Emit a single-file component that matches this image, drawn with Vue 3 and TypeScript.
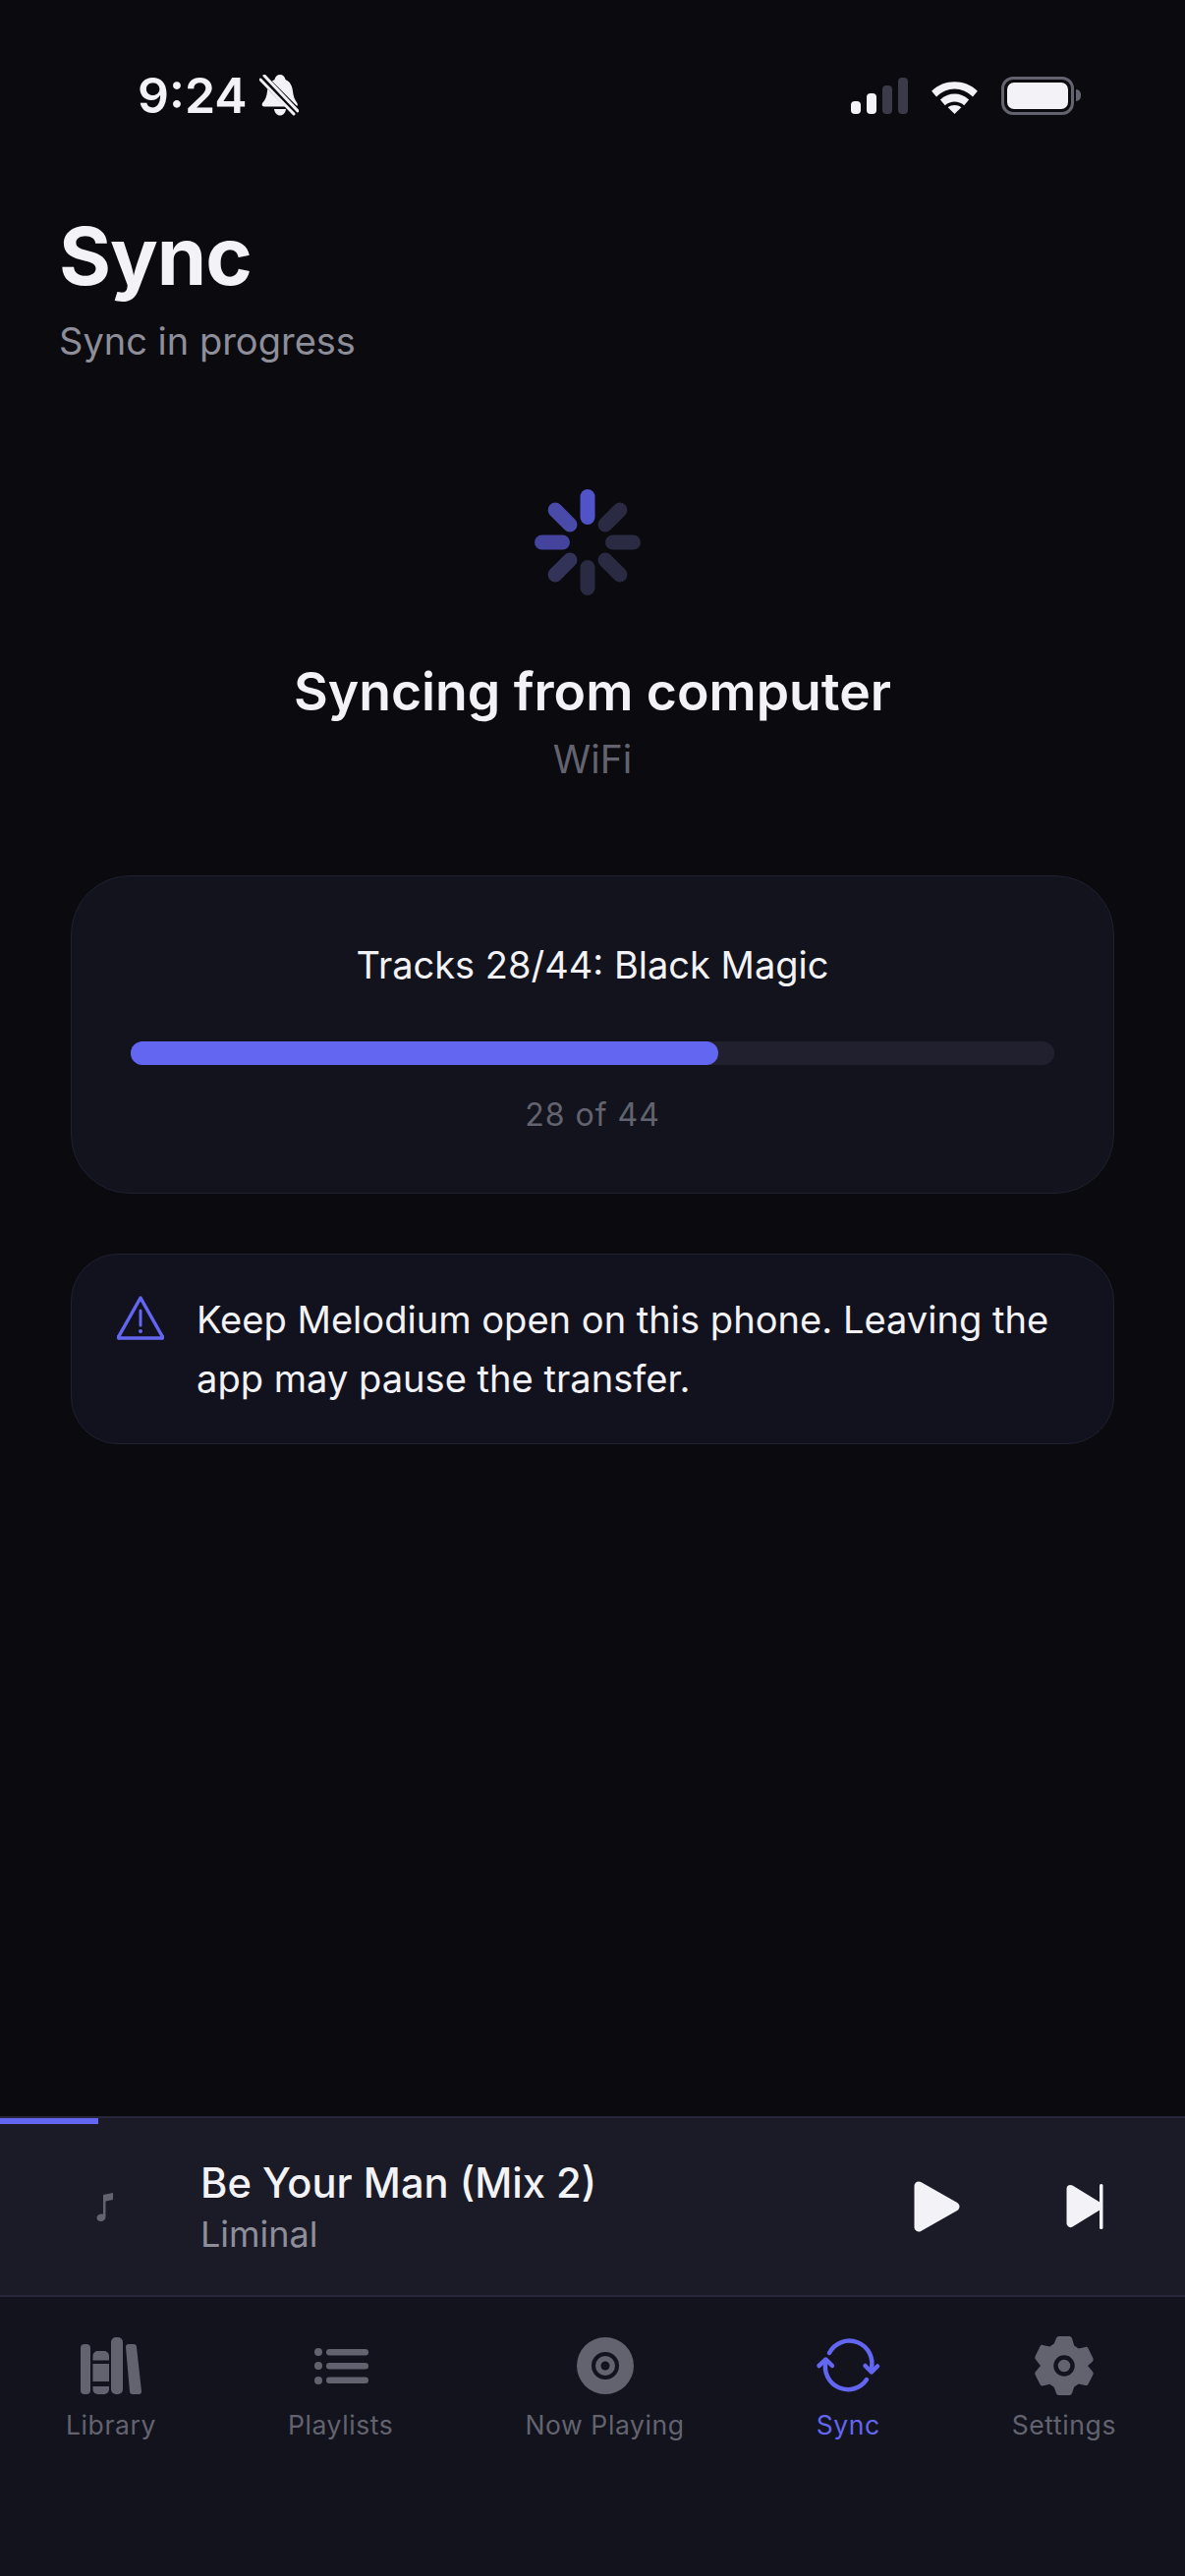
<template>
  <div class="screen">
    <header class="status">
      <div class="status-left">
        <span class="time">9:24</span>
        <svg class="bell" viewBox="0 0 40 42" width="40" height="42">
          <path d="M21 0c3 0 5 2 5.500 5 5 2 7 7 7.500 12 .5 5 2 9 4.500 12 1 2 0 3.500-2 3.500H5c-2 0-3-1.500-2-3.500 3-3 4.500-7 5-12 .5-5 2.500-10 7.500-12C16 2 18 0 21 0z" fill="#f2f2f7"/>
          <path d="M15 35h12c-.5 4-3 6.500-6 6.500S15.500 39 15 35z" fill="#f2f2f7"/>
          <path d="M0 0 40 40" stroke="#0a0a0f" stroke-width="9"/>
          <path d="M1 5 35 40" stroke="#f2f2f7" stroke-width="3" stroke-linecap="round"/>
          <path d="M5 1 39 37" stroke="#f2f2f7" stroke-width="3" stroke-linecap="round"/>
        </svg>
      </div>
      <div class="status-right">
        <div class="signal">
          <i class="bar on" style="height:13px"></i>
          <i class="bar on" style="height:21px"></i>
          <i class="bar" style="height:29px"></i>
          <i class="bar" style="height:37px"></i>
        </div>
        <svg class="wifi" viewBox="0 0 50 38" width="51" height="37">
          <path d="M1 14C14 1 36 1 49 14l-5 6C33 9 17 9 6 20z" fill="#f2f2f7"/>
          <path d="M10 23c9-8 21-8 30 0l-5 6c-6-5-14-5-20 0z" fill="#f2f2f7"/>
          <path d="M18 31c4-3 10-3 14 0l-7 7z" fill="#f2f2f7"/>
        </svg>
        <div class="battery">
          <div class="battery-body"><div class="battery-fill"></div></div>
          <div class="battery-tip"></div>
        </div>
      </div>
    </header>

    <div class="page-head">
      <h1>Sync</h1>
      <p>Sync in progress</p>
    </div>

    <section class="hero">
      <svg class="spinner" viewBox="0 0 108 108" width="108" height="108">
        <rect
          v-for="(c, i) in spokes"
          :key="i"
          x="46.500"
          y="0"
          width="15"
          height="36"
          rx="7.500"
          :fill="c"
          :transform="`rotate(${i * 45} 54 54)`"
        />
      </svg>
      <h2>Syncing from computer</h2>
      <div class="via">WiFi</div>
    </section>

    <section class="card progress-card">
      <div class="track-line">Tracks 28/44: Black Magic</div>
      <div class="bar-track">
        <div class="bar-fill" :style="{ width: (28 / 44) * 100 + '%' }"></div>
      </div>
      <div class="count">28 of 44</div>
    </section>

    <section class="card notice">
      <svg class="warn" viewBox="0 0 48 46" width="48" height="46" fill="none">
        <path d="M24 3 46 42a1 1 0 0 1-1 2H3a1 1 0 0 1-1-2z" stroke="#6366f1" stroke-width="3.500" stroke-linejoin="round"/>
        <path d="M24 16v15" stroke="#6366f1" stroke-width="3" stroke-linecap="round"/>
        <circle cx="24" cy="37" r="2" fill="#6366f1"/>
      </svg>
      <p>Keep Melodium open on this phone. Leaving the app may pause the transfer.</p>
    </section>

    <div class="spacer"></div>

    <section class="mini">
      <div class="mini-progress"></div>
      <div class="mini-art">
        <svg viewBox="0 0 18 30" width="18" height="30">
          <path d="M7 3 17 1v7L9.500 9.500V25.500C9.500 28 7.500 30 4.500 30 2 30 .5 28.500.5 26.500S2.500 22 7 22.500z" fill="#636370"/>
        </svg>
      </div>
      <div class="mini-text">
        <div class="mini-title">Be Your Man (Mix 2)</div>
        <div class="mini-artist">Liminal</div>
      </div>
      <svg class="play" viewBox="0 0 47 52" width="47" height="52">
        <path d="M5 5 42 26 5 47z" fill="#f2f2f7" stroke="#f2f2f7" stroke-width="9" stroke-linejoin="round"/>
      </svg>
      <svg class="next" viewBox="0 0 38 46" width="38" height="46">
        <path d="M4.500 5 33 22.500 4.500 40z" fill="#f2f2f7" stroke="#f2f2f7" stroke-width="8" stroke-linejoin="round"/>
        <rect x="34" y="0" width="3.500" height="46" rx="1.500" fill="#f2f2f7"/>
      </svg>
    </section>

    <nav class="tabs">
      <div v-for="t in tabs" :key="t.label" class="tab" :class="{ active: t.active }">
        <svg class="tab-icon" viewBox="0 0 64 60" width="64" height="60" v-html="t.icon"></svg>
        <span>{{ t.label }}</span>
      </div>
    </nav>
  </div>
</template>

<script setup lang="ts">
// spinner spokes, clockwise from 12 o'clock
const spokes: string[] = [
  '#5154c8', '#2a2a42', '#2a2a42', '#2a2a42',
  '#2a2a42', '#33335a', '#44449c', '#4a4aa8',
]

const gray = '#636370'
const indigo = '#6366f1'

const libraryIcon = `
  <rect x="1" y="8" width="10" height="51" rx="4" fill="${gray}"/>
  <path d="M13.500 24.500V20a5 5 0 0 1 5-5h6.500a5 5 0 0 1 5 5v4.500z" fill="${gray}"/>
  <rect x="13.500" y="28" width="16.500" height="18" fill="${gray}"/>
  <path d="M13.500 51H30v3a5 5 0 0 1-5 5h-6.500a5 5 0 0 1-5-5z" fill="${gray}"/>
  <rect x="32" y="1" width="12" height="58" rx="5" fill="${gray}"/>
  <path d="M50 11 55 11 60 56 54 56z" fill="${gray}" stroke="${gray}" stroke-width="6" stroke-linejoin="round"/>`

const listIcon = `
  <circle cx="9" cy="16" r="4" fill="${gray}"/>
  <circle cx="9" cy="30" r="4" fill="${gray}"/>
  <circle cx="9" cy="45" r="4" fill="${gray}"/>
  <rect x="17" y="13" width="43" height="6.500" rx="3.250" fill="${gray}"/>
  <rect x="17" y="27" width="43" height="6.500" rx="3.250" fill="${gray}"/>
  <rect x="17" y="41.500" width="43" height="6.500" rx="3.250" fill="${gray}"/>`

const discIcon = `
  <circle cx="32" cy="30" r="29" fill="${gray}"/>
  <circle cx="32" cy="30" r="12" fill="none" stroke="#12131c" stroke-width="4"/>
  <circle cx="32" cy="30" r="4.500" fill="#12131c"/>`

// sync arcs share one circle of r=23 around (32,30)
const syncIcon = `
  <g fill="none" stroke="${indigo}" stroke-width="4.500" stroke-linecap="round" stroke-linejoin="round">
    <path d="M13 17A23 23 0 0 1 55.500 34"/>
    <path d="M49.500 30 56 36.500 62 30.500"/>
    <path d="M51 44A23 23 0 0 1 9.500 26"/>
    <path d="M2.500 30 9.500 23.500 16 30"/>
  </g>`

const gearIcon = `
  <path d="M26 0h12c1.500 0 2.500 1 3 2l2.500 7.500 5 3 8-1.600c1.500-.3 2.500.3 3 1.300l5.500 10c.6 1.200.5 2.300-.4 3.200L59 30l5.600 6c.9 1 1 2 .4 3.200l-5.500 9.600c-.5 1-1.500 1.600-3 1.300l-8-1.600-5 3L41 58c-.5 1.200-1.500 2-3 2H26c-1.500 0-2.500-.8-3-2L20.500 51.800l-5-3-8 1.600c-1.500.3-2.500-.3-3-1.300L-1 39.200c-.6-1.200-.5-2.200.4-3.200L5 30l-5.600-6.600c-.9-.9-1-2-.4-3.200l5.500-10c.5-1 1.500-1.600 3-1.300l8 1.600 5-3L23 2c.5-1 1.500-2 3-2z" fill="${gray}" transform="translate(3.500 0) scale(.89 1)"/>
  <circle cx="32" cy="30" r="8.500" fill="none" stroke="#12131c" stroke-width="4.500"/>`

interface Tab {
  label: string
  icon: string
  active?: boolean
}

const tabs: Tab[] = [
  { label: 'Library', icon: libraryIcon },
  { label: 'Playlists', icon: listIcon },
  { label: 'Now Playing', icon: discIcon },
  { label: 'Sync', icon: syncIcon, active: true },
  { label: 'Settings', icon: gearIcon },
]
</script>

<style scoped>
.screen {
  width: 1206px;
  height: 2622px;
  background: #0a0a0f;
  display: flex;
  flex-direction: column;
  font-family: Inter, "Liberation Sans", sans-serif;
  color: #f2f2f7;
  overflow: hidden;
}

.status {
  height: 136px;
  flex: none;
  display: flex;
  justify-content: space-between;
  align-items: center;
  padding: 58px 106px 0 140px;
  box-sizing: border-box;
}
.status-left, .status-right {
  display: flex;
  align-items: center;
}
.time {
  font-size: 50px;
  font-weight: 600;
  line-height: 60px;
}
.bell { margin-left: 12px; }
.status-right { gap: 22px; }
.signal {
  display: flex;
  align-items: flex-end;
  gap: 6px;
}
.bar {
  width: 10px;
  border-radius: 4px;
  background: #3a3a48;
}
.bar.on { background: #f2f2f7; }
.battery {
  display: flex;
  align-items: center;
  gap: 2px;
}
.battery-body {
  width: 74px;
  height: 39px;
  box-sizing: border-box;
  border: 3px solid #636370;
  border-radius: 12px;
  padding: 3px;
}
.battery-fill {
  height: 100%;
  background: #f2f2f7;
  border-radius: 7px;
}
.battery-tip {
  width: 5px;
  height: 12px;
  background: #636370;
  border-radius: 0 5px 5px 0;
}

.page-head { padding: 80px 60px 0; }
.page-head h1 {
  margin: 0;
  font-size: 81px;
  font-weight: 700;
  line-height: 90px;
  letter-spacing: -1px;
}
.page-head p {
  margin: 17px 0 0;
  font-size: 38px;
  line-height: 48px;
  color: #8e8e9a;
}

.hero {
  display: flex;
  flex-direction: column;
  align-items: center;
  padding-top: 127px;
}
.spinner {
  margin-left: -10px;
  display: block;
}
.hero h2 {
  margin: 65px 0 0;
  font-size: 53.500px;
  font-weight: 600;
  line-height: 66px;
}
.via {
  margin-top: 12px;
  font-size: 39px;
  line-height: 48px;
  color: #636370;
}

.card {
  margin: 0 72px;
  border: 1.500px solid #1f2030;
  box-sizing: border-box;
  background: #12131c;
}
.progress-card {
  margin-top: 94px;
  height: 324px;
  border-radius: 60px;
  padding: 65px 60px 0;
  display: flex;
  flex-direction: column;
  align-items: center;
}
.track-line {
  font-size: 38px;
  line-height: 50px;
}
.bar-track {
  align-self: stretch;
  height: 24px;
  margin-top: 53px;
  border-radius: 12px;
  background: #20202f;
}
.bar-fill {
  height: 100%;
  border-radius: 12px;
  background: #6366f1;
}
.count {
  margin-top: 28px;
  font-size: 32px;
  line-height: 46px;
  letter-spacing: 1px;
  color: #636370;
}

.notice {
  margin-top: 61px;
  height: 194px;
  border-radius: 48px;
  background: #12121f;
  display: flex;
  align-items: flex-start;
  gap: 33px;
  padding: 36px 40px 0 46px;
}
.warn {
  flex: none;
  margin-top: 5px;
}
.notice p {
  margin: 0;
  font-size: 38.100px;
  line-height: 60px;
}

.spacer { flex: 1; }

.mini {
  position: relative;
  height: 184px;
  flex: none;
  box-sizing: border-box;
  background: #1a1b26;
  border-top: 2px solid #26273a;
  border-bottom: 2px solid #26273a;
  display: flex;
  align-items: center;
  padding-right: 83px;
}
.mini-progress {
  position: absolute;
  left: 0;
  top: 0;
  width: 100px;
  height: 6px;
  background: #6366f1;
}
.mini-art {
  width: 204px;
  flex: none;
  padding-left: 98px;
  box-sizing: border-box;
  display: flex;
}
.mini-text { flex: 1; }
.mini-title {
  font-size: 41.700px;
  font-weight: 500;
  line-height: 54px;
}
.mini-artist {
  margin-top: 2px;
  font-size: 36px;
  line-height: 46px;
  color: #8e8e9a;
}
.play { margin-right: 108px; }

.tabs {
  flex: none;
  height: 284px;
  box-sizing: border-box;
  background: #12131c;
  display: flex;
  justify-content: space-around;
  align-items: flex-start;
  padding-top: 40px;
  padding-right: 3px;
}
.tab {
  display: flex;
  flex-direction: column;
  align-items: center;
  color: #636370;
  font-size: 26.500px;
  line-height: 36px;
  letter-spacing: .6px;
}
.tab.active { color: #6366f1; }
.tab-icon { overflow: visible; }
.tab span { margin-top: 12px; }
</style>

<style>
html, body { background: #0a0a0f; }
</style>
